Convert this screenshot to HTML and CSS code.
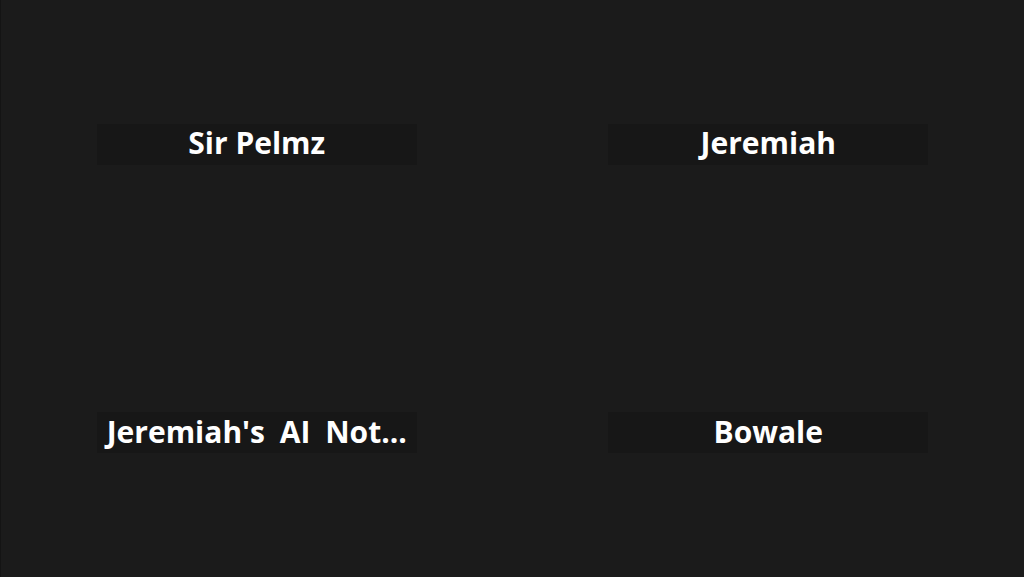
FILE: index.html
```html
<!DOCTYPE html>
<html lang="en">
<head>
    <meta charset="UTF-8">
    <meta name="viewport" content="width=device-width, initial-scale=1.0">
    <title>Meeting</title>
    <link rel="stylesheet" href="styles.css">
</head>
<body>

    <div class="gallery">
        <div class="tile">
            <div class="name-tag"><span class="name">Sir Pelmz</span></div>
        </div>
        <div class="tile">
            <div class="name-tag"><span class="name">Jeremiah</span></div>
        </div>
        <div class="tile">
            <div class="name-tag"><span class="name long">Jeremiah's AI Not...</span></div>
        </div>
        <div class="tile">
            <div class="name-tag"><span class="name">Bowale</span></div>
        </div>
    </div>

</body>
</html>
```

FILE: styles.css
```css
html, body {
    margin: 0;
    height: 100%;
}

body {
    background: #1b1b1b;
    color: #ffffff;
    font-family: "Open Sans", "Noto Sans", sans-serif;
    border-left: 1px solid #141414;
    box-sizing: border-box;
    overflow: hidden;
}

.gallery {
    display: grid;
    grid-template-columns: 1fr 1fr;
    grid-template-rows: 1fr 1fr;
    height: 100%;
}

.tile {
    display: flex;
    align-items: center;
    justify-content: center;
}

/* name label in the middle of each video tile */
.name-tag {
    width: 320px;
    height: 41px;
    padding: 0 8px 3px;
    box-sizing: border-box;
    background: #171717;
    display: flex;
    align-items: center;
    justify-content: center;
}

.name {
    font-size: 30px;
    font-weight: 700;
    white-space: nowrap;
}

.name.long {
    word-spacing: 7px;
}
```
